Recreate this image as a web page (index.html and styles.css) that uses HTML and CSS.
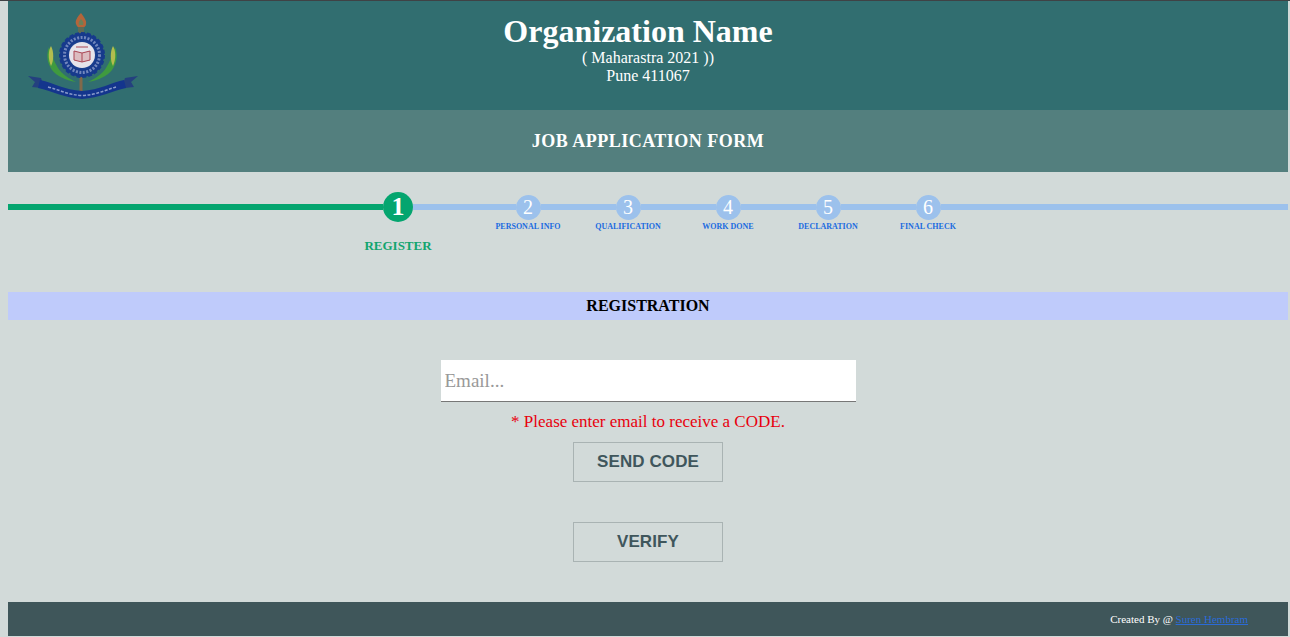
FILE: index.html
```html
<!DOCTYPE html>
<html lang="en">
<head>
  <meta charset="UTF-8">
  <title>Job Application Form</title>
  <link rel="stylesheet" href="styles.css">
</head>
<body>
  <div class="page">
    <header class="top">
      <svg class="logo" width="112" height="88" viewBox="0 0 112 88">
        <path d="M53 0c-4 4-6 8-5 11 1 3 3 4 5 4s5-1 5-4c1-3-2-7-5-11z" fill="#b4653a"/>
        <path d="M53 6c-2 2-3 4-2 6h4c1-2 0-4-2-6z" fill="#6d7f58"/>
        <rect x="50" y="14" width="6" height="6" fill="#5f6b55"/>
        <path d="M21 34c-3 8-2 16 3 23 5 6 13 10 24 12-8-4-14-8-18-14-4-6-6-13-9-21z" fill="#3f9a3f"/>
        <path d="M87 34c3 8 2 16-3 23-5 6-13 10-24 12 8-4 14-8 18-14 4-6 6-13 9-21z" fill="#3f9a3f"/>
        <path d="M23 33c-3 5-3 13 0 20 3-6 3-14 0-20z" fill="#b3bd4e"/>
        <path d="M85 33c3 5 3 13 0 20-3-6-3-14 0-20z" fill="#b3bd4e"/>
        <rect x="51.500" y="62" width="3" height="17" fill="#82694a"/>
        <circle cx="54" cy="42" r="22" fill="#173a8c" stroke="#173a8c" stroke-width="2" stroke-dasharray="4 2"/>
        <circle cx="54" cy="42" r="17.500" fill="none" stroke="#7287bd" stroke-width="3" stroke-dasharray="2 1.500"/>
        <circle cx="54" cy="42" r="14.500" fill="#1a3f8f"/>
        <circle cx="54" cy="42" r="13" fill="#e6e3ea"/>
        <path d="M46 38l8 2 8-2v9l-8 2-8-2z" fill="#dcbcc0" stroke="#a94553" stroke-width="1"/>
        <path d="M54 40v9M48 34h12" stroke="#a94553" stroke-width="1"/>
        <path d="M0 63l13 2 2 6-2 4-9-1 3-5z" fill="#24407f"/>
        <path d="M110 63l-13 2-2 6 2 4 9-1-3-5z" fill="#24407f"/>
        <path d="M12 67c14 3 24 10 42 11 18-1 28-8 42-11l2 8c-14 3-26 10-44 11-18-1-30-8-44-11z" fill="#14358d"/>
        <path d="M20 74c12 3 20 8 34 8.500 14-.5 22-5 34-8.500" fill="none" stroke="#8b9ccb" stroke-width="1.500" stroke-dasharray="3 1.500"/>
      </svg>
      <div class="org">
        <h1>Organization Name</h1>
        <p>( Maharastra 2021 ))</p>
        <p>Pune 411067</p>
      </div>
    </header>

    <div class="form-title">JOB APPLICATION FORM</div>

    <div class="steps">
      <div class="line line-done"></div>
      <div class="step step-active">
        <span class="dot">1</span>
        <span class="step-name">REGISTER</span>
      </div>
      <div class="line line-first"></div>
      <div class="step">
        <span class="dot">2</span>
        <span class="step-name">PERSONAL INFO</span>
      </div>
      <div class="line line-short"></div>
      <div class="step">
        <span class="dot">3</span>
        <span class="step-name">QUALIFICATION</span>
      </div>
      <div class="line line-short"></div>
      <div class="step">
        <span class="dot">4</span>
        <span class="step-name">WORK DONE</span>
      </div>
      <div class="line line-short"></div>
      <div class="step">
        <span class="dot">5</span>
        <span class="step-name">DECLARATION</span>
      </div>
      <div class="line line-short"></div>
      <div class="step">
        <span class="dot">6</span>
        <span class="step-name">FINAL CHECK</span>
      </div>
      <div class="line line-rest"></div>
    </div>

    <h2 class="section">REGISTRATION</h2>

    <form class="reg-form">
      <input type="text" class="email" placeholder="Email...">
      <p class="hint">* Please enter email to receive a CODE.</p>
      <button type="button" class="btn">SEND CODE</button>
      <button type="button" class="btn btn-verify">VERIFY</button>
    </form>

    <footer class="bottom">
      <span>Created By @ <a href="#">Suren Hembram</a></span>
    </footer>
  </div>
</body>
</html>
```

FILE: styles.css
```css
html, body {
  height: 100%;
}

body {
  margin: 0;
  padding: 0 2px 0 8px;
  background-color: #d2dad9;
  border-top: 1px solid #3f4245;
  box-sizing: border-box;
  font-family: "Liberation Serif", "Times New Roman", serif;
  overflow: hidden;
}

.page {
  width: 1280px;
}

.top {
  height: 109px;
  background-color: #316e70;
  color: white;
  display: flex;
  justify-content: center;
  text-align: center;
  position: relative;
}

.logo {
  position: absolute;
  left: 20px;
  top: 12px;
}

.org {
  padding-top: 12px;
  line-height: 18px;
  font-size: 16px;
}

.org h1 {
  margin: 0 20px 0 0;
  font-size: 32px;
  line-height: 36px;
}

.org p {
  margin: 0;
}

.form-title {
  height: 62px;
  line-height: 62px;
  background-color: #537f7e;
  color: white;
  font-size: 18px;
  font-weight: bold;
  letter-spacing: 0.5px;
  text-align: center;
}

.steps {
  display: flex;
  height: 120px;
  padding-top: 20px;
  box-sizing: border-box;
}

.line {
  height: 6px;
  margin-top: 12px;
  background-color: #9cc1ec;
}

.line-done {
  width: 375px;
  background-color: #04a56f;
}

.line-first {
  width: 102.5px;
}

.line-short {
  width: 75px;
}

.line-rest {
  flex: 1;
}

.step {
  width: 25px;
  display: flex;
  flex-direction: column;
  align-items: center;
  padding-top: 3px;
}

.dot {
  width: 25px;
  height: 25px;
  line-height: 25px;
  flex: none;
  border-radius: 50%;
  background-color: #9cc1ec;
  color: white;
  font-size: 20px;
  text-align: center;
}

.step-name {
  margin-top: 1px;
  color: #1a6be0;
  font-size: 8px;
  font-weight: bold;
  line-height: 12px;
  white-space: nowrap;
}

.step-active {
  width: 30px;
  padding-top: 0;
}

.step-active .dot {
  width: 30px;
  height: 30px;
  line-height: 30px;
  background-color: #04a56f;
  font-size: 26px;
  font-weight: bold;
}

.step-active .step-name {
  margin-top: 16px;
  color: #12a56f;
  font-size: 13px;
  line-height: 15px;
}

.section {
  margin: 0;
  height: 28px;
  line-height: 28px;
  background-color: #bfcbfb;
  color: black;
  font-size: 16px;
  text-align: center;
}

.reg-form {
  display: flex;
  flex-direction: column;
  align-items: center;
  padding-top: 40px;
  height: 282px;
  box-sizing: border-box;
}

.email {
  width: 415px;
  height: 42px;
  padding: 0 4px;
  box-sizing: border-box;
  border: none;
  border-bottom: 1px solid #777;
  background: white;
  font-family: inherit;
  font-size: 19px;
  outline: none;
}

.email::placeholder {
  color: #999;
}

.hint {
  margin: 10px 0 10px;
  color: #e8000d;
  font-size: 17px;
  line-height: 20px;
}

.btn {
  width: 150px;
  height: 40px;
  background: transparent;
  border: 1px solid #a9b3b3;
  color: #3f565c;
  font-family: "Liberation Sans", Arial, sans-serif;
  font-size: 17px;
  font-weight: bold;
  letter-spacing: 0.1px;
  cursor: pointer;
}

.btn-verify {
  margin-top: 40px;
}

.bottom {
  height: 34px;
  background-color: #3f565a;
  color: white;
  font-size: 11px;
  display: flex;
  justify-content: flex-end;
  align-items: center;
  padding-right: 40px;
}

.bottom a {
  color: #2a6bd8;
}
```
